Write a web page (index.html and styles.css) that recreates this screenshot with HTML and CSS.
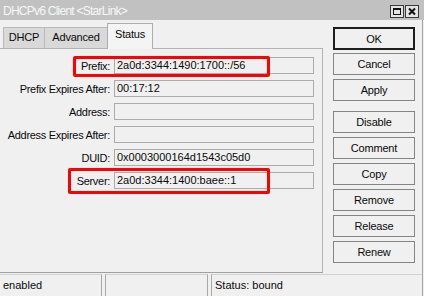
FILE: index.html
```html
<!DOCTYPE html>
<html lang="en">
<head>
    <meta charset="UTF-8" />
    <title>DHCPv6 Client</title>
    <link rel="stylesheet" href="styles.css">
</head>
<body>
    <div class="window">
        <div class="titlebar">
            <span class="title">DHCPv6 Client &lt;StarLink&gt;</span>
            <div class="win-btns">
                <svg width="14" height="13" viewBox="0 0 14 13">
                    <rect x="0.5" y="0.5" width="13" height="12" fill="#e4e4e4" stroke="#3a3a3a" />
                    <rect x="3.5" y="3.5" width="7" height="6" fill="none" stroke="#111" />
                    <line x1="3" y1="4" x2="11" y2="4" stroke="#111" stroke-width="2" />
                </svg>
                <svg width="14" height="13" viewBox="0 0 14 13">
                    <rect x="0.5" y="0.5" width="13" height="12" fill="#e4e4e4" stroke="#3a3a3a" />
                    <path d="M4 3.5 L10 9.5 M10 3.5 L4 9.5" stroke="#111" stroke-width="2" />
                </svg>
            </div>
        </div>

        <div class="content">
            <div class="main">
                <div class="tabs-area">
                    <div class="tabs">
                        <div class="tab tab-dhcp">DHCP</div>
                        <div class="tab tab-adv">Advanced</div>
                        <div class="tab tab-status active">Status</div>
                    </div>
                    <div class="panel">
                        <div class="row">
                            <span class="label">Prefix:</span>
                            <div class="field">2a0d:3344:1490:1700::/56</div>
                        </div>
                        <div class="row">
                            <span class="label">Prefix Expires After:</span>
                            <div class="field">00:17:12</div>
                        </div>
                        <div class="row">
                            <span class="label">Address:</span>
                            <div class="field"></div>
                        </div>
                        <div class="row">
                            <span class="label">Address Expires After:</span>
                            <div class="field"></div>
                        </div>
                        <div class="row">
                            <span class="label">DUID:</span>
                            <div class="field">0x0003000164d1543c05d0</div>
                        </div>
                        <div class="row">
                            <span class="label">Server:</span>
                            <div class="field">2a0d:3344:1400:baee::1</div>
                        </div>
                    </div>
                </div>

                <div class="buttons">
                    <button class="btn btn-default">OK</button>
                    <button class="btn">Cancel</button>
                    <button class="btn">Apply</button>
                    <button class="btn btn-gap">Disable</button>
                    <button class="btn">Comment</button>
                    <button class="btn">Copy</button>
                    <button class="btn">Remove</button>
                    <button class="btn">Release</button>
                    <button class="btn">Renew</button>
                </div>
            </div>

            <div class="statusbar">
                <div class="cell cell-1">enabled</div>
                <div class="cell cell-2"></div>
                <div class="cell cell-3">Status: bound</div>
            </div>
        </div>

        <div class="mark mark-prefix"></div>
        <div class="mark mark-server"></div>
    </div>
</body>
</html>
```

FILE: styles.css
```css
html, body {
    margin: 0;
    padding: 0;
}

body {
    font-family: "Liberation Sans", Arial, sans-serif;
    font-size: 11px;
    color: #0a0a0a;
    background-color: #f0f0f0;
}

.window {
    position: relative;
    width: 424px;
    height: 296px;
    overflow: hidden;
    background-color: #f0f0f0;
}

/* title bar */
.titlebar {
    height: 20px;
    background-color: #c1c1c1;
    display: flex;
    align-items: flex-end;
    justify-content: space-between;
    padding: 0 5px 0 3px;
}

.title {
    color: #f7f7f7;
    font-size: 12px;
    letter-spacing: -0.75px;
    line-height: 14px;
    padding-bottom: 2px;
}

.win-btns {
    display: flex;
    gap: 1px;
    padding-bottom: 2px;
}

.win-btns svg {
    display: block;
}

/* main area */
.content {
    width: 423px;
    box-sizing: border-box;
    border-right: 1px solid #a3a3a3;
}

.main {
    display: flex;
    height: 253px;
}

.tabs-area {
    width: 323px;
}

.tabs {
    height: 28px;
    display: flex;
    align-items: flex-end;
    padding-left: 3px;
    box-sizing: border-box;
}

.tab {
    height: 21px;
    box-sizing: border-box;
    background-color: #d9d9d9;
    border: 1px solid #b9b9b9;
    border-bottom: none;
    line-height: 19px;
    letter-spacing: -0.2px;
    text-align: center;
}

.tab-dhcp {
    width: 42px;
}

.tab-adv {
    width: 63px;
    border-left: none;
}

.tab-status {
    width: 46px;
}

.tab.active {
    position: relative;
    z-index: 1;
    height: 26px;
    margin-bottom: -1px;
    margin-left: -1px;
    background-color: #f4f4f4;
    border-color: #adadad;
    line-height: 20px;
}

.panel {
    height: 225px;
    box-sizing: border-box;
    border-top: 1px solid #b4b4b4;
    border-right: 1px solid #b4b4b4;
    border-bottom: 1px solid #a0a0a0;
    padding-top: 8px;
}

.row {
    display: flex;
    align-items: center;
    height: 17px;
    margin-bottom: 6px;
}

.label {
    width: 110px;
    text-align: right;
    letter-spacing: -0.3px;
    white-space: nowrap;
}

.field {
    width: 200px;
    height: 17px;
    margin-left: 4px;
    box-sizing: border-box;
    border: 1px solid #ababab;
    padding-left: 2px;
    line-height: 15px;
    white-space: nowrap;
    overflow: hidden;
}

/* buttons */
.buttons {
    width: 82px;
    margin-left: 10px;
    padding-top: 7px;
    display: flex;
    flex-direction: column;
}

.btn {
    height: 22px;
    margin: 0 0 4px 0;
    padding: 0;
    box-sizing: border-box;
    border: 1px solid #858585;
    background-color: #f0f0f0;
    font-family: inherit;
    font-size: 11px;
    letter-spacing: -0.2px;
    color: #0a0a0a;
}

.btn-default {
    height: 23px;
    margin-bottom: 3px;
    border: 2px solid #1e1e1e;
}

.btn-gap {
    margin-top: 6px;
}

/* status bar */
.statusbar {
    display: flex;
    gap: 3px;
    margin-top: 1px;
    height: 22px;
}

.cell {
    box-sizing: border-box;
    border-top: 1px solid #d2d2d2;
    border-left: 1px solid #a8a8a8;
    border-right: 1px solid #a8a8a8;
    padding: 4px 0 0 3px;
    line-height: 13px;
}

.cell-1 {
    width: 102px;
    border-left: none;
}

.cell-2 {
    width: 103px;
}

.cell-3 {
    flex: 1;
    border-right: none;
}

/* red annotation boxes */
.mark {
    position: absolute;
    border: 3px solid #ff0000;
    border-radius: 2px;
    box-sizing: border-box;
}

.mark-prefix {
    left: 73px;
    top: 56px;
    width: 197px;
    height: 21px;
}

.mark-server {
    left: 68px;
    top: 168px;
    width: 202px;
    height: 26px;
}
```
